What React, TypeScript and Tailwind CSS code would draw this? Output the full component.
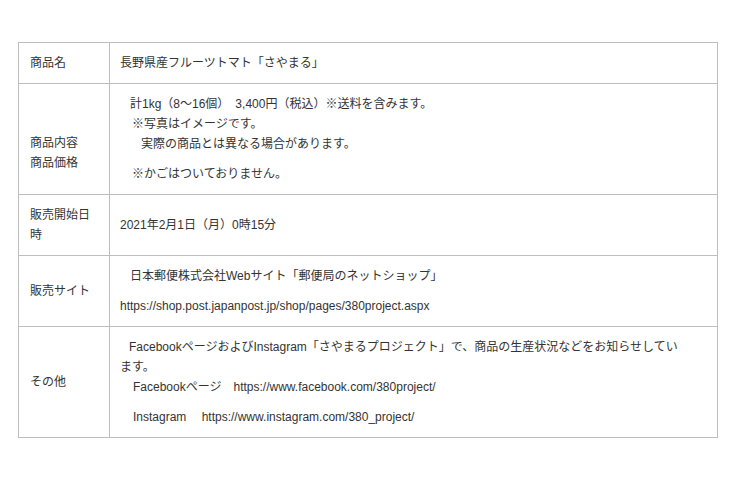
export default function App() {
  const font = { fontFamily: '"Liberation Sans", "Noto Sans CJK JP", sans-serif' }

  return (
    <div className="w-[740px] h-[478px] bg-white pt-[42px] pl-[18px]" style={font}>
      <div className="w-[700px] border border-[#bdbdbd] text-[12px] leading-[20px] text-[#333]">
        {/* 商品名 */}
        <div className="flex">
          <div className="w-[91px] shrink-0 border-r border-[#bdbdbd] px-[11px] py-[10px] flex items-center">
            商品名
          </div>
          <div className="flex-1 px-[10px] py-[10px]">長野県産フルーツトマト「さやまる」</div>
        </div>

        {/* 商品内容 */}
        <div className="flex border-t border-[#bdbdbd]">
          <div className="w-[91px] shrink-0 border-r border-[#bdbdbd] px-[11px] pt-[49px]">
            <p>商品内容</p>
            <p>商品価格</p>
          </div>
          <div className="flex-1 px-[10px] py-[10px] whitespace-nowrap">
            <p className="pl-[10px]">計1kg（8～16個）　3,400円（税込）※送料を含みます。</p>
            <p className="pl-[12px]">※写真はイメージです。</p>
            <p className="pl-[21px]">実際の商品とは異なる場合があります。</p>
            <p className="pl-[12px] mt-[10px]">※かごはついておりません。</p>
          </div>
        </div>

        {/* 販売開始日時 */}
        <div className="flex border-t border-[#bdbdbd]">
          <div className="w-[91px] shrink-0 border-r border-[#bdbdbd] px-[11px] py-[10px]">
            販売開始日<br />時
          </div>
          <div className="flex-1 px-[10px] py-[10px] flex items-center">2021年2月1日（月）0時15分</div>
        </div>

        {/* 販売サイト */}
        <div className="flex border-t border-[#bdbdbd]">
          <div className="w-[91px] shrink-0 border-r border-[#bdbdbd] px-[11px] py-[10px] flex items-center">
            販売サイト
          </div>
          <div className="flex-1 px-[10px] py-[10px] whitespace-nowrap">
            <p className="pl-[10px]">日本郵便株式会社Webサイト「郵便局のネットショップ」</p>
            <p className="mt-[10px]">https://shop.post.japanpost.jp/shop/pages/380project.aspx</p>
          </div>
        </div>

        {/* その他 */}
        <div className="flex border-t border-[#bdbdbd]">
          <div className="w-[91px] shrink-0 border-r border-[#bdbdbd] px-[11px] py-[10px] flex items-center">
            その他
          </div>
          <div className="flex-1 px-[10px] py-[10px] whitespace-nowrap">
            <p>
              <span className="pl-[9px]">
                FacebookページおよびInstagram「さやまるプロジェクト」で、商品の生産状況などをお知らせしてい
              </span>
              <br />
              ます。
            </p>
            <p className="pl-[13px]">Facebookページ　https://www.facebook.com/380project/</p>
            <p className="pl-[13px] mt-[10px]">Instagram　 https://www.instagram.com/380_project/</p>
          </div>
        </div>
      </div>
    </div>
  )
}
